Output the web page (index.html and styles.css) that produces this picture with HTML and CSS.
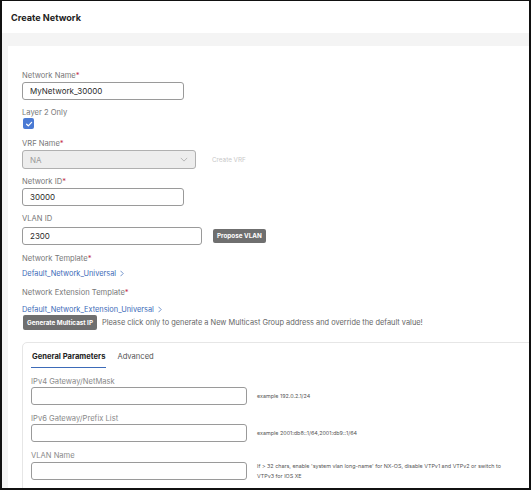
FILE: index.html
```html
<!DOCTYPE html>
<html>
<head>
<meta charset="utf-8">
<link rel="stylesheet" href="styles.css">
</head>
<body>
<div class="frame">
  <header class="title-bar"><h1>Create Network</h1></header>
  <div class="band"></div>
  <div class="page">
    <main class="card">
      <div class="field">
        <label class="lbl">Network Name<span class="req">*</span></label>
        <div class="input w162"><span class="val">MyNetwork_30000</span></div>
      </div>
      <div class="field check-field">
        <label class="lbl">Layer 2 Only</label>
        <span class="checkbox">
          <svg viewBox="0 0 10 10" width="10" height="10"><polyline points="2.6,5.2 4.3,6.8 7.6,3.3" fill="none" stroke="#fff" stroke-width="1.2" stroke-linecap="round" stroke-linejoin="round"/></svg>
        </span>
      </div>
      <div class="field">
        <label class="lbl">VRF Name<span class="req">*</span></label>
        <div class="row">
          <div class="input select w174"><span class="val dim">NA</span>
            <svg class="chev" viewBox="0 0 10 6" width="8" height="5"><polyline points="1,1 5,5 9,1" fill="none" stroke="#aaa" stroke-width="1"/></svg>
          </div>
          <span class="ghost">Create VRF</span>
        </div>
      </div>
      <div class="field">
        <label class="lbl">Network ID<span class="req">*</span></label>
        <div class="input w162"><span class="val">30000</span></div>
      </div>
      <div class="field vlan-field">
        <label class="lbl">VLAN ID</label>
        <div class="row">
          <div class="input w180"><span class="val">2300</span></div>
          <button class="btn">Propose VLAN</button>
        </div>
      </div>
      <div class="field tpl">
        <label class="lbl">Network Template<span class="req">*</span></label>
        <a class="link">Default_Network_Universal <svg viewBox="0 0 5 8" width="4" height="7"><polyline points="0.6,0.6 4,4 0.6,7.4" fill="none" stroke="#3d6bb8" stroke-width="0.9"/></svg></a>
      </div>
      <div class="field tpl tpl-ext">
        <label class="lbl">Network Extension Template<span class="req">*</span></label>
        <a class="link">Default_Network_Extension_Universal <svg viewBox="0 0 5 8" width="4" height="7"><polyline points="0.6,0.6 4,4 0.6,7.4" fill="none" stroke="#3d6bb8" stroke-width="0.9"/></svg></a>
        <div class="row mc">
          <button class="btn btn-wide">Generate Multicast IP</button>
          <span class="note">Please click only to generate a New Multicast Group address and override the default value!</span>
        </div>
      </div>

      <section class="panel">
        <nav class="tabs">
          <span class="tab active">General Parameters</span>
          <span class="tab">Advanced</span>
        </nav>
        <div class="pfield">
          <label class="plbl">IPv4 Gateway/NetMask</label>
          <div class="row">
            <div class="input w216"></div>
            <span class="hint">example 192.0.2.1/24</span>
          </div>
        </div>
        <div class="pfield">
          <label class="plbl">IPv6 Gateway/Prefix List</label>
          <div class="row">
            <div class="input w216"></div>
            <span class="hint">example 2001:db8::1/64,2001:db9::1/64</span>
          </div>
        </div>
        <div class="pfield">
          <label class="plbl">VLAN Name</label>
          <div class="row">
            <div class="input w216"></div>
            <span class="hint two">If &gt; 32 chars, enable 'system vlan long-name' for NX-OS, disable VTPv1 and VTPv2 or switch to VTPv3 for IOS XE</span>
          </div>
        </div>
      </section>
    </main>
  </div>
</div>
</body>
</html>
```

FILE: styles.css
```css
* { box-sizing: border-box; }
html, body { margin: 0; padding: 0; background: #fff; }
body { font-family: Inter, "Noto Sans", "Liberation Sans", sans-serif; color: #333; }

.frame {
  width: 531px;
  height: 490px;
  border: 2px solid #111;
  border-top-width: 1px;
  overflow: hidden;
  background: #fff;
  display: flex;
  flex-direction: column;
}

.title-bar {
  height: 32px;
  display: flex;
  align-items: center;
  padding-left: 9px;
  flex-shrink: 0;
}
.title-bar h1 {
  margin: 0;
  font-size: 9.1px;
  font-weight: 700;
  color: #222;
}

.band { height: 13px; background: #f4f4f4; flex-shrink: 0; }

.page {
  flex: 1;
  background: #f4f4f4;
  padding-left: 6px;
  display: flex;
}
.card {
  flex: 1;
  background: #fff;
  padding: 25px 0 0 14px;
  min-width: 0;
}

.field { margin-bottom: 8px; }
.lbl {
  display: block;
  font-size: 7.6px;
  line-height: 10px;
  height: 10px;
  color: #777;
  margin-bottom: 1px;
}
.req { color: #c4314b; }

.row { display: flex; align-items: center; }

.input {
  height: 18px;
  border: 1px solid #9a9a9a;
  border-radius: 3px;
  background: #fff;
  display: flex;
  align-items: center;
  padding-left: 7px;
  flex-shrink: 0;
}
.val { font-size: 8px; color: #2a2a2a; }
.val.dim { color: #9a9a9a; }
.w162 { width: 162px; }
.w174 { width: 174px; }
.w180 { width: 180px; }
.w216 { width: 216px; }

.select {
  height: 19px;
  background: #ededed;
  border-color: #b0b0b0;
  justify-content: space-between;
  padding-right: 7px;
}

.ghost { font-size: 6.3px; color: #c8c8c8; margin-left: 16px; }

.check-field .lbl { margin-bottom: 0; }
.check-field { margin-bottom: 10px; }
.checkbox {
  display: flex;
  width: 11px;
  height: 11px;
  border-radius: 2px;
  background: #4a7ad4;
  align-items: center;
  justify-content: center;
  margin-left: 1px;
}

.vlan-field .lbl { margin-bottom: 3px; }
.vlan-field { margin-bottom: 9px; }

.btn {
  font-family: inherit;
  border: 0;
  background: #6f6f6f;
  color: #fff;
  font-weight: 700;
  font-size: 6.3px;
  height: 14px;
  padding: 0 4px;
  border-radius: 2px;
  margin-left: 11px;
  line-height: 14px;
}
.btn-wide { margin-left: 1px; height: 15px; padding: 0 4px; }

.tpl { margin-bottom: 9px; }
.tpl .lbl { margin-bottom: 4px; }
.tpl-ext .lbl { margin-bottom: 6px; }
.link {
  display: flex;
  align-items: center;
  gap: 4px;
  font-size: 7.4px;
  line-height: 11px;
  color: #3d6bb8;
}
.mc { margin-top: 0; }
.note { font-size: 7.4px; color: #666; margin-left: 5px; }

.panel {
  margin-top: 12px;
  margin-right: -20px;
  border: 1px solid #e6e6e6;
  border-radius: 5px;
  padding: 8px 0 0 8px;
  height: 200px;
}
.tabs { display: flex; gap: 11px; height: 17px; margin-bottom: 9px; }
.tab { font-size: 7.6px; color: #555; line-height: 12px; }
.tab.active {
  font-weight: 700;
  color: #222;
  border-bottom: 1px solid #3d6bb8;
  padding: 0 1px;
  height: 17px;
}

.pfield { margin-bottom: 9px; }
.plbl {
  display: block;
  font-size: 7.6px;
  line-height: 10px;
  color: #8a8a8a;
  margin-bottom: 0;
}
.hint { font-size: 5.4px; color: #555; margin-left: 10px; line-height: 10px; }
.hint.two { width: 250px; }
```
